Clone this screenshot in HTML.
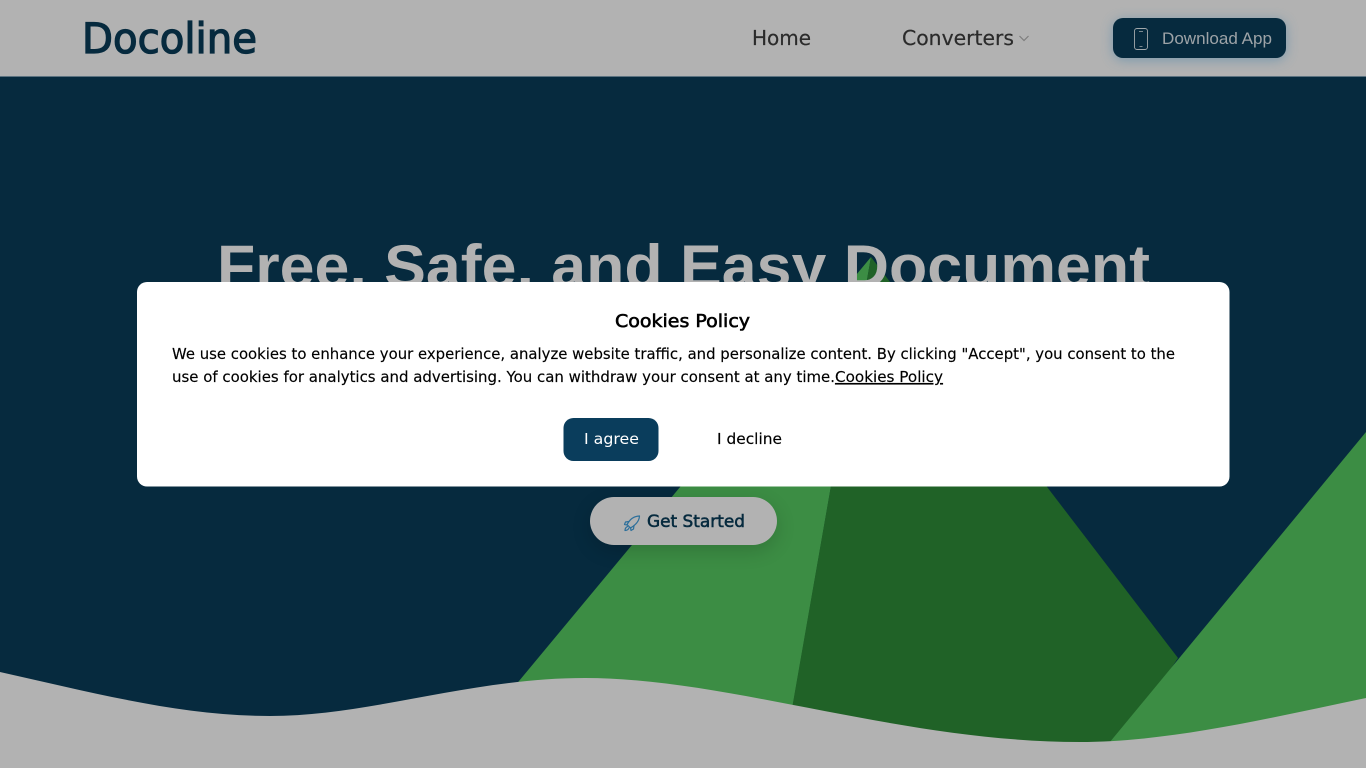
<!DOCTYPE html>
<html lang="en">
<head>
<meta charset="utf-8">
<title>Docoline</title>
<style>
html,body{margin:0;padding:0;width:1366px;height:768px;overflow:hidden;background:#b2b2b2}
svg{display:block}
text{font-family:"DejaVu Sans","Liberation Sans",sans-serif}
</style>
</head>
<body>
<svg xmlns="http://www.w3.org/2000/svg" width="1366" height="768" viewBox="0 0 1366 768">
  <defs>
    <filter id="s1" x="-30%" y="-50%" width="160%" height="200%"><feGaussianBlur stdDeviation="6"/></filter>
    <filter id="s2" x="-30%" y="-50%" width="160%" height="200%"><feGaussianBlur stdDeviation="10"/></filter>
  </defs>

  <!-- hero -->
  <rect x="0" y="76" width="1366" height="692" fill="#062a3e"/>
  <polygon points="871,257 480,728 785,750" fill="#3c8d44"/>
  <polygon points="871,257 783,760 1110,760 1178,658" fill="#206227"/>
  <polygon points="1366,432 1100,754 1366,754" fill="#3c8d44"/>
  <path d="M0 672C90 692 180 716 270 716C370 716 470 678 585 678C730 678 900 742 1080 742C1170 742 1270 718 1366 698V768H0Z" fill="#b2b2b2"/>

  <!-- header -->
  <rect x="0" y="0" width="1366" height="76" fill="#b2b2b2"/>
  <rect x="0" y="76" width="1366" height="1" fill="#5b7280"/>
  <text x="82" y="53" font-size="42" font-weight="400" fill="#062a3e" stroke="#062a3e" stroke-width="1.300" textLength="175" lengthAdjust="spacingAndGlyphs">Docoline</text>
  <text x="752" y="45" font-size="20" fill="#2b2b2b" stroke="#2b2b2b" stroke-width=".2" textLength="59" lengthAdjust="spacing">Home</text>
  <text x="902" y="45" font-size="20" fill="#2b2b2b" stroke="#2b2b2b" stroke-width=".2" textLength="112" lengthAdjust="spacingAndGlyphs">Converters</text>
  <path d="M1019.500 36l4.500 4.500 4.500-4.500" fill="none" stroke="#7d7d7d" stroke-width="1.200"/>

  <rect x="1113" y="20" width="173" height="40" rx="10" fill="#3f7fa8" opacity=".5" filter="url(#s1)"/>
  <rect x="1113" y="18" width="173" height="40" rx="10" fill="#062a3e"/>
  <rect x="1134.500" y="28.500" width="13" height="21" rx="2.500" fill="none" stroke="#a3a9ac" stroke-width=".9"/>
  <path d="M1139 31.500h4M1139.500 46.500h3" stroke="#a3a9ac" stroke-width=".8" fill="none"/>
  <text x="1162" y="44" font-size="16.500" fill="#9da3a7" font-weight="400" style="font-family:'Liberation Sans',sans-serif" textLength="110" lengthAdjust="spacingAndGlyphs">Download App</text>

  <!-- headline -->
  <text x="217" y="287" font-size="60" font-weight="700" fill="#b2b2b2" style="font-family:'Liberation Sans',sans-serif" textLength="933" lengthAdjust="spacingAndGlyphs">Free, Safe, and Easy Document</text>

  <!-- Get started -->
  <rect x="590" y="503" width="187" height="48" rx="24" fill="#000" opacity=".16" filter="url(#s2)"/>
  <rect x="590" y="497" width="187" height="48" rx="24" fill="#b2b2b2"/>
  <g fill="none" stroke="#2c6f9b" stroke-width="1.200" stroke-linejoin="round" stroke-linecap="round">
    <path d="M639.500 516c-4.500.2-8 2.200-10.500 5.500l-2 3 3.500 3.500 3-2c3.300-2.500 5.800-5.500 6-10z"/>
    <path d="M629 521.500l-3.500.5-1 2.500 3 .5M634 525.500l-.5 3.500-2.500 1.500-.5-3"/>
    <path d="M627.500 526.500c-1.700.8-2.500 2.200-2.500 4 1.800 0 3.200-.8 4-2.500"/>
  </g>
  <text x="647" y="527" font-size="17" font-weight="400" fill="#062a3e" stroke="#062a3e" stroke-width=".55" textLength="98" lengthAdjust="spacingAndGlyphs">Get Started</text>

  <!-- modal -->
  <rect x="137" y="282" width="1092.500" height="204.500" rx="10" fill="#fff"/>
  <text x="615" y="327" font-size="18" font-weight="400" fill="#000" stroke="#000" stroke-width=".6" textLength="135" lengthAdjust="spacingAndGlyphs">Cookies Policy</text>
  <text x="172" y="359" font-size="15" fill="#000" stroke="#000" stroke-width=".15" textLength="1003" lengthAdjust="spacingAndGlyphs">We use cookies to enhance your experience, analyze website traffic, and personalize content. By clicking "Accept", you consent to the</text>
  <text x="172" y="382" font-size="15" fill="#000" stroke="#000" stroke-width=".15" textLength="663" lengthAdjust="spacingAndGlyphs">use of cookies for analytics and advertising. You can withdraw your consent at any time.</text>
  <text x="835" y="382" font-size="15" fill="#000" stroke="#000" stroke-width=".15" text-decoration="underline" textLength="108" lengthAdjust="spacingAndGlyphs">Cookies Policy</text>

  <rect x="563.500" y="418" width="95" height="43" rx="10" fill="#0a3d5c"/>
  <text x="584" y="444" font-size="15" fill="#fff" textLength="55" lengthAdjust="spacingAndGlyphs">I agree</text>
  <text x="717" y="444" font-size="15" fill="#000" stroke="#000" stroke-width=".15" textLength="65" lengthAdjust="spacingAndGlyphs">I decline</text>
</svg>
</body>
</html>
